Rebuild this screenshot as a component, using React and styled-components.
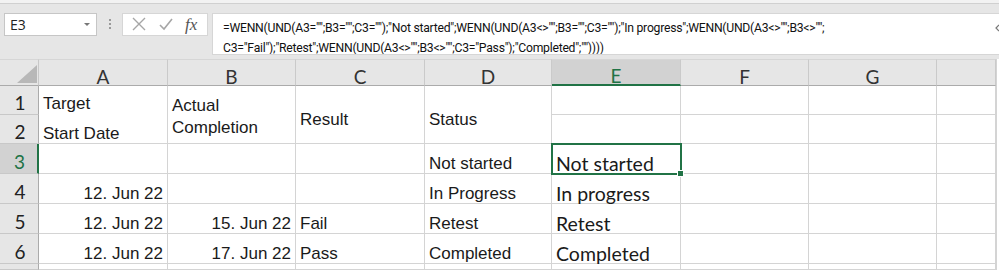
import React from "react";
import styled, { createGlobalStyle } from "styled-components";

const GlobalStyle = createGlobalStyle`
  html, body {
    margin: 0;
    padding: 0;
    background: #e6e6e6;
  }
  body {
    width: 999px;
    height: 270px;
    overflow: hidden;
  }
`;

const Window = styled.div`
  width: 999px;
  height: 270px;
  display: flex;
  flex-direction: column;
  background: #e6e6e6;
`;

// ======= Formula bar START ========
const TopStrip = styled.div`
  height: 3px;
  background: #f2f2f2;
  border-bottom: 1px solid #d0d0d0;
`;

const Toolbar = styled.div`
  display: flex;
  align-items: flex-start;
  padding: 9px 0 0 4px;
  height: 60px;
  box-sizing: border-box;
`;

const NameBox = styled.div`
  width: 93px;
  height: 23px;
  box-sizing: border-box;
  background: #fff;
  border: 1px solid #c6c6c6;
  display: flex;
  align-items: center;
  justify-content: space-between;
  padding: 0 6px 0 5px;
  font-family: "Open Sans", sans-serif;
  font-size: 14px;
  color: #222;
`;

const Caret = styled.span`
  width: 0;
  height: 0;
  border-left: 3px solid transparent;
  border-right: 3px solid transparent;
  border-top: 3px solid #777;
`;

const Grip = styled.div`
  width: 25px;
  height: 23px;
  display: flex;
  flex-direction: column;
  align-items: center;
  justify-content: center;
  gap: 2px;
  span {
    width: 2px;
    height: 2px;
    background: #9a9a9a;
  }
`;

const ButtonBox = styled.div`
  width: 86px;
  height: 23px;
  box-sizing: border-box;
  background: #fff;
  border: 1px solid #d6d6d6;
  display: flex;
  align-items: center;
  justify-content: space-around;
  padding: 0 4px 0 2px;
`;

const Fx = styled.span`
  font-family: "Liberation Serif", serif;
  font-style: italic;
  font-size: 17px;
  color: #555;
  line-height: 1;
`;

const FormulaBox = styled.div`
  flex: 1;
  margin-left: 4px;
  height: 42px;
  box-sizing: border-box;
  background: #fff;
  border: 1px solid #d6d6d6;
  border-right: none;
  padding: 4px 0 0 10px;
  font-family: Roboto, "Open Sans", sans-serif;
  font-size: 12.2px;
  letter-spacing: -0.25px;
  line-height: 20px;
  color: #111;
  white-space: pre;
  overflow: hidden;
  position: relative;
`;

const Expand = styled.svg`
  position: absolute;
  right: 0;
  top: 10px;
`;
// ======= Formula bar END ========

// ======= Sheet START ========
const Sheet = styled.div`
  display: grid;
  grid-template-columns: 39px 129px 128px 129px 127px 129px 128px 128px 59px 1fr;
  grid-template-rows: 27px 29px 29px 30px 30px 30px 30px 1fr;
  background: #fff;
  flex: 1;
`;

const Corner = styled.div`
  background: #e6e6e6;
  border-top: 1px solid #d6d6d6;
  border-right: 1px solid #c8c8c8;
  border-bottom: 1px solid #ababab;
  position: relative;
  &::after {
    content: "";
    position: absolute;
    right: 1px;
    bottom: 2px;
    width: 0;
    height: 0;
    border-left: 20px solid transparent;
    border-bottom: 18px solid #b8b8b8;
  }
`;

const ColHead = styled.div`
  background: ${(p) => (p.$active ? "#d2d2d2" : "#e6e6e6")};
  color: ${(p) => (p.$active ? "#217346" : "#333")};
  border-top: 1px solid #d6d6d6;
  border-right: 1px solid #cacaca;
  border-bottom: ${(p) => (p.$active ? "2px solid #217346" : "1px solid #ababab")};
  display: flex;
  align-items: center;
  justify-content: center;
  font-family: "Lato", "Open Sans", sans-serif;
  font-size: 19px;
  padding-top: 7px;
  box-sizing: border-box;
`;

const RowHead = styled.div`
  background: ${(p) => (p.$active ? "#d2d2d2" : "#e6e6e6")};
  color: ${(p) => (p.$active ? "#217346" : "#222")};
  border-right: ${(p) => (p.$active ? "2px solid #217346" : "1px solid #ababab")};
  border-bottom: 1px solid #c8c8c8;
  display: flex;
  align-items: center;
  justify-content: center;
  font-family: "Lato", "Open Sans", sans-serif;
  font-size: 19px;
  padding: 5px 0 0 2px;
  box-sizing: border-box;
`;

const Cell = styled.div`
  grid-row: ${(p) => (p.$span ? `span ${p.$span}` : "auto")};
  border-right: 1px solid #d4d4d4;
  border-bottom: 1px solid #d4d4d4;
  box-sizing: border-box;
  display: flex;
  flex-direction: column;
  justify-content: ${(p) => (p.$top ? "flex-start" : "flex-end")};
  align-items: ${(p) => (p.$right ? "flex-end" : "flex-start")};
  padding: ${(p) => (p.$top ? 3 : 0)}px 4px ${(p) => (p.$pb != null ? p.$pb : 0)}px 4px;
  font-family: ${(p) =>
    p.$calibri ? `"Lato", "Open Sans", sans-serif` : `"Liberation Sans", Arial, sans-serif`};
  font-size: ${(p) => (p.$calibri ? "19.5px" : "17px")};
  line-height: ${(p) => p.$lh || 19}px;
  color: #1a1a1a;
  white-space: nowrap;
  position: relative;
  ${(p) =>
    p.$selected &&
    `
    outline: 2px solid #217346;
    outline-offset: -1px;
    z-index: 1;
    &::after {
      content: "";
      position: absolute;
      right: -4px;
      bottom: -4px;
      width: 5px;
      height: 5px;
      background: #217346;
      border: 1px solid #fff;
    }
  `}
`;

const Edge = styled.div`
  background: #fff;
  border-left: 1px solid #d4d4d4;
`;
// ======= Sheet END ========

const CloseIcon = () => (
  <svg width="16" height="16" viewBox="0 0 16 16">
    <path d="M2 2 L14 14 M14 2 L2 14" stroke="#a6a6a6" strokeWidth="1.4" fill="none" />
  </svg>
);

const CheckIcon = () => (
  <svg width="16" height="16" viewBox="0 0 16 16">
    <path d="M2 9 L6 13 L14 3" stroke="#a6a6a6" strokeWidth="1.6" fill="none" />
  </svg>
);

const columns = ["A", "B", "C", "D", "E", "F", "G", "H"];

const App = () => {
  return (
    <Window>
      <GlobalStyle />
      <TopStrip />
      <Toolbar>
        <NameBox>
          E3
          <Caret />
        </NameBox>
        <Grip>
          <span />
          <span />
          <span />
        </Grip>
        <ButtonBox>
          <CloseIcon />
          <CheckIcon />
          <Fx>fx</Fx>
        </ButtonBox>
        <FormulaBox>
          {`=WENN(UND(A3="";B3="";C3="");"Not started";WENN(UND(A3<>"";B3="";C3="");"In progress";WENN(UND(A3<>"";B3<>"";\nC3="Fail");"Retest";WENN(UND(A3<>"";B3<>"";C3="Pass");"Completed";""))))`}
          <Expand width="4" height="8" viewBox="0 0 4 8">
            <path d="M4 1 L1 4 L4 7" stroke="#777" strokeWidth="1.2" fill="none" />
          </Expand>
        </FormulaBox>
      </Toolbar>

      <Sheet>
        <Corner />
        {columns.map((c) => (
          <ColHead key={c} $active={c === "E"}>
            {c !== "H" ? c : ""}
          </ColHead>
        ))}
        <Edge style={{ gridRow: "1 / span 8", gridColumn: 10 }} />

        {/* rows 1-2 */}
        <RowHead>1</RowHead>
        <Cell $span={2} $top $lh={30}>
          <span>Target</span>
          <span>Start Date</span>
        </Cell>
        <Cell $span={2} $lh={22} $pb={4}>
          <span>Actual</span>
          <span>Completion</span>
        </Cell>
        <Cell $span={2} $pb={14}>Result</Cell>
        <Cell $span={2} $pb={14}>Status</Cell>
        <Cell $calibri />
        <Cell />
        <Cell />
        <Cell />
        <RowHead>2</RowHead>
        <Cell $calibri />
        <Cell />
        <Cell />
        <Cell />

        {/* row 3 */}
        <RowHead $active>3</RowHead>
        <Cell />
        <Cell />
        <Cell />
        <Cell>Not started</Cell>
        <Cell $calibri $selected>Not started</Cell>
        <Cell />
        <Cell />
        <Cell />

        {/* row 4 */}
        <RowHead>4</RowHead>
        <Cell $right>12. Jun 22</Cell>
        <Cell />
        <Cell />
        <Cell>In Progress</Cell>
        <Cell $calibri>In progress</Cell>
        <Cell />
        <Cell />
        <Cell />

        {/* row 5 */}
        <RowHead>5</RowHead>
        <Cell $right>12. Jun 22</Cell>
        <Cell $right>15. Jun 22</Cell>
        <Cell>Fail</Cell>
        <Cell>Retest</Cell>
        <Cell $calibri>Retest</Cell>
        <Cell />
        <Cell />
        <Cell />

        {/* row 6 */}
        <RowHead>6</RowHead>
        <Cell $right>12. Jun 22</Cell>
        <Cell $right>17. Jun 22</Cell>
        <Cell>Pass</Cell>
        <Cell>Completed</Cell>
        <Cell $calibri>Completed</Cell>
        <Cell />
        <Cell />
        <Cell />

        <RowHead />
        <Cell />
        <Cell />
        <Cell />
        <Cell />
        <Cell />
        <Cell />
        <Cell />
        <Cell />
      </Sheet>
    </Window>
  );
};

export default App;
